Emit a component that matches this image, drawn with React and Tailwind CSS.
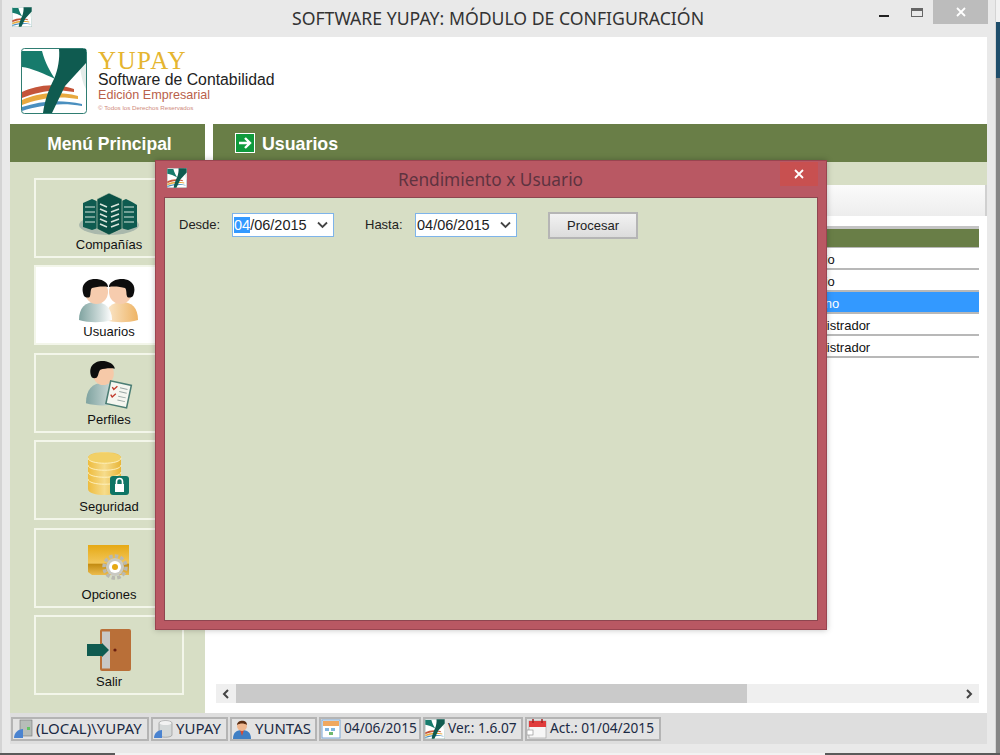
const font = { fontFamily: '"Liberation Sans", Arial, sans-serif' };
const uiFont = { fontFamily: '"Noto Sans", "Open Sans", sans-serif' };

// Yupay logo, used big in the header and small in the title bars
const YupayLogo = ({ size }) => (
  <svg width={size} height={size} viewBox="0 0 66 66" className="shrink-0">
    <rect x="0.5" y="0.5" width="65" height="65" rx="3" fill="#fff" stroke="#2f7d72" />
    <path d="M1 3h20c3 12 8 20 13 28C24 26 10 20 1 19z" fill="#177b6c" />
    <path d="M56 1h9v40c-6-10-6-28-9-40z" fill="#e4ece9" />
    <path d="M1 44c14-6 30-10 52-3v3C34 40 16 44 1 50z" fill="#c4553a" />
    <path d="M1 52c14-6 32-10 56-4v3C36 47 16 51 1 57z" fill="#e8a93e" />
    <path d="M1 59c18-6 38-8 60-3v2C38 54 18 58 1 63z" fill="#4a8fbf" />
    <path d="M38 1h27v14L44 38 31 65H22c2-14 6-24 11-34C37 22 39 10 38 1z" fill="#0f5b50" />
  </svg>
);

const Buildings = () => (
  <svg width="60" height="44" viewBox="0 0 60 44">
    <ellipse cx="30" cy="33" rx="30" ry="10" fill="#a9b8ac" />
    <path d="M4 11l9-4 9 4v24l-9 3-9-3z" fill="#0f5b50" />
    <path d="M38 11l9-4 6 3 5 3v22l-9 3-11-3z" fill="#0f5b50" />
    <path d="M18 7L30 1l13 6v30l-13 6-12-6z" fill="#0b5146" stroke="#d7dec5" strokeWidth="0.6" />
    <g stroke="#d8e5dc" strokeWidth="1.6">
      <path d="M21 12l7 3M21 17l7 3M21 22l7 3M21 27l7 3M21 32l7 3" />
      <path d="M32 15l8-3M32 20l8-3M32 25l8-3M32 30l8-3M32 35l8-3" />
      <path d="M6 15h10M6 20h10M6 25h10M6 30h10" strokeWidth="1.2" />
      <path d="M45 15h10M45 20h10M45 25h10M45 30h10" strokeWidth="1.2" />
    </g>
  </svg>
);

const Person = ({ body, flip }) => (
  <g transform={flip ? 'translate(59,0) scale(-1,1)' : undefined}>
    <path d="M0 41c0-12 6-18 16-18s17 6 17 18c-10 3-23 3-33 0z" fill={body} />
    <ellipse cx="17.5" cy="13" rx="11.5" ry="12" fill="#f6ccae" />
    <path d="M5 17C0 5 9-1 18 0c7 1 11 4 11 8-5-1-12 0-16 1-2 2-1 6-2 8 0 2-4 2-6 0z" fill="#0d0d0d" />
  </g>
);

const Users2 = () => (
  <svg width="60" height="44" viewBox="0 0 60 44">
    <defs>
      <linearGradient id="ub1" x1="0" x2="1">
        <stop offset="0" stopColor="#7fa3a0" />
        <stop offset="0.65" stopColor="#cfdcdb" />
        <stop offset="1" stopColor="#ffffff" />
      </linearGradient>
      <linearGradient id="ub2" x1="0" x2="1">
        <stop offset="0" stopColor="#eeb465" />
        <stop offset="1" stopColor="#fbe9d0" />
      </linearGradient>
    </defs>
    <Person body="url(#ub2)" flip />
    <Person body="url(#ub1)" />
  </svg>
);

const Perfil = () => (
  <svg width="48" height="52" viewBox="0 0 50 52">
    <defs>
      <linearGradient id="pb" x1="0" x2="1">
        <stop offset="0" stopColor="#7fa3a0" />
        <stop offset="1" stopColor="#dfe8e6" />
      </linearGradient>
    </defs>
    <path d="M1 45c0-14 7-21 17-21s17 7 17 21c-10 3-24 3-34 0z" fill="url(#pb)" />
    <ellipse cx="19" cy="14" rx="11" ry="12" fill="#f6c9a8" />
    <path d="M7 18C2 6 11 0 20 1c7 1 11 5 11 8-5-1-11 0-15 1-2 2-2 6-3 7 0 2-4 3-6 1z" fill="#0d0d0d" />
    <g transform="rotate(12 36 36)">
      <rect x="24" y="24" width="22" height="24" fill="#f5f6f0" stroke="#4b7d74" strokeWidth="1.6" />
      <path d="M35 29h8M35 33h8M35 38h8M35 42h8" stroke="#9aa7a5" strokeWidth="1" />
      <path d="M27 30l2 2 3-4M27 38l2 2 3-4" stroke="#c0392b" strokeWidth="1.4" fill="none" />
    </g>
  </svg>
);

const Coins = () => (
  <svg width="42" height="44" viewBox="0 0 42 44" className="mb-[2px]">
    <defs>
      <linearGradient id="cg" x1="0" x2="1">
        <stop offset="0" stopColor="#eebc3e" />
        <stop offset="0.5" stopColor="#f6dc8c" />
        <stop offset="1" stopColor="#e8b537" />
      </linearGradient>
    </defs>
    <path d="M0 6c0-8 33-8 33 0v31c0 8-33 8-33 0z" fill="url(#cg)" />
    <ellipse cx="16.5" cy="6" rx="16.5" ry="5.5" fill="#f2d066" />
    <g fill="none" stroke="#fff3c4" strokeWidth="0.9">
      <path d="M0 6c0 7 33 7 33 0M0 13c0 7 33 7 33 0M0 20c0 7 33 7 33 0M0 27c0 7 33 7 33 0" />
    </g>
    <rect x="22" y="24" width="19" height="19" rx="3" fill="#0f7565" />
    <rect x="27" y="32" width="9" height="8" fill="#fff" />
    <path d="M28.5 32v-2.5a3 3 0 016 0V32" stroke="#fff" strokeWidth="1.6" fill="none" />
  </svg>
);

const OptionsIcon = () => (
  <svg width="44" height="38" viewBox="0 0 44 38" className="mb-[4px]">
    <defs>
      <linearGradient id="og" x1="0" y1="0" x2="0" y2="1">
        <stop offset="0" stopColor="#e6a914" />
        <stop offset="0.6" stopColor="#f2c659" />
        <stop offset="0.65" stopColor="#c48d14" />
        <stop offset="1" stopColor="#ecbc4d" />
      </linearGradient>
    </defs>
    <path d="M1 1h41v30H5l-4-3z" fill="url(#og)" />
    <circle cx="28" cy="23" r="11" fill="none" stroke="#b9b9b1" strokeWidth="3.5" strokeDasharray="3.5 2.2" />
    <circle cx="28" cy="23" r="9" fill="#c9c9c2" />
    <circle cx="28" cy="23" r="6" fill="#fff" />
    <circle cx="28" cy="23" r="3" fill="#e6a914" />
  </svg>
);

const DoorIcon = () => (
  <svg width="46" height="44" viewBox="0 0 46 44" className="mb-[1px]">
    <rect x="14" y="1" width="31" height="42" rx="2" fill="#b96f38" />
    <rect x="16" y="3.5" width="8" height="37" fill="#c8c8c6" />
    <circle cx="29" cy="22" r="1.6" fill="#6a1f10" />
    <path d="M1 16h15v-1l7 7-7 7v-1H1z" fill="#0f5b50" />
  </svg>
);

const MenuItem = ({ label, icon, active }) => (
  <div
    className={`w-[150px] h-[80px] shrink-0 border-2 border-[#f3f6ea] flex flex-col items-center justify-end pb-[4px] text-[13px] leading-[15px] text-[#111] ${active ? 'bg-white' : ''}`}
  >
    <div className="h-[52px] flex items-end justify-center">{icon}</div>
    <span className="mt-[1px]">{label}</span>
  </div>
);

// names are set a little bigger than the dates, Noto's digits run wide
const StatusCell = ({ w, icon, small, children }) => (
  <div
    className={`h-[24px] border-2 border-[#b4b4b4] bg-[#e3e3e3] flex items-center gap-[3px] text-[#1b2a44] whitespace-nowrap ${small ? 'text-[13.7px]' : 'text-[15px]'}`}
    style={{ ...uiFont, width: w }}
  >
    {icon}
    <span>{children}</span>
  </div>
);

const ServerIco = () => (
  <svg width="20" height="20" viewBox="0 0 20 20" className="shrink-0">
    <rect x="7" y="1" width="12" height="16" fill="#b7bdb9" stroke="#777" strokeWidth="0.6" />
    <path d="M1 19c0-5 4-9 9-9v9z" fill="#4a83d0" />
    <rect x="14" y="8" width="3" height="3" fill="#62c462" />
  </svg>
);

const DbIco = () => (
  <svg width="20" height="20" viewBox="0 0 20 20" className="shrink-0">
    <path d="M6 4c0-3 13-3 13 0v12c0 3-13 3-13 0z" fill="#d4d8d8" stroke="#8a8a8a" strokeWidth="0.6" />
    <ellipse cx="12.5" cy="4" rx="6" ry="2" fill="#f2f2f2" />
    <path d="M1 19c0-5 4-8 8-8v8z" fill="#4a83d0" />
  </svg>
);

const UserIco = () => (
  <svg width="20" height="20" viewBox="0 0 20 20" className="shrink-0">
    <path d="M1 20c0-7 4-9 9-9s9 2 9 9z" fill="#3f7fc4" />
    <path d="M8 11h4l-2 6z" fill="#d84c33" />
    <circle cx="10" cy="7" r="5" fill="#efb78f" />
    <path d="M5 6c0-5 10-6 10 0-3-2-7-2-10 0z" fill="#5a2e14" />
  </svg>
);

const CalIco = () => (
  <svg width="20" height="20" viewBox="0 0 20 20" className="shrink-0">
    <rect x="1" y="1" width="18" height="18" fill="#fff" stroke="#7aa7d8" />
    <rect x="2" y="2" width="16" height="5" fill="#f0a860" />
    <path d="M4 9h4v3H4zM10 9h4v3h-4z" fill="#7fb5e0" />
    <path d="M8 13h4v3H8z" fill="#6fb86f" />
  </svg>
);

const ActIco = () => (
  <svg width="20" height="20" viewBox="0 0 20 20" className="shrink-0">
    <rect x="2" y="2" width="17" height="17" fill="#f6f6f6" stroke="#999" strokeWidth="0.6" />
    <rect x="2" y="2" width="17" height="6" fill="#e03c3c" />
    <path d="M6 0v4M15 0v4" stroke="#a02222" strokeWidth="1.5" />
    <rect x="0" y="11" width="6" height="5" fill="#fff" stroke="#888" strokeWidth="0.6" />
  </svg>
);

const Chevron = ({ dir }) => (
  <svg width="10" height="10" viewBox="0 0 10 10">
    <path d={dir === 'left' ? 'M7 1L3 5l4 4' : 'M3 1l4 4-4 4'} fill="none" stroke="#444" strokeWidth="2" />
  </svg>
);

const CloseX = () => (
  <svg width="10" height="10" viewBox="0 0 10 10">
    <path d="M1 1l8 8M9 1l-8 8" stroke="#fff" strokeWidth="1.8" />
  </svg>
);

const DateField = ({ selected }) => (
  <div className="w-[102px] h-[24px] bg-white border border-[#7eb4ea] flex items-center justify-between pl-[1px] pr-[5px] text-[14.5px] text-[#222]">
    <span className="pt-[1px]">
      {selected ? <span className="bg-[#3399ff] text-white">04</span> : '04'}/06/2015
    </span>
    <svg width="11" height="8" viewBox="0 0 11 8">
      <path d="M1 1.5l4.5 4.5L10 1.5" fill="none" stroke="#444" strokeWidth="1.8" />
    </svg>
  </div>
);

const Row = ({ text, selected }) => (
  <div className={`h-[22px] border-b-2 border-[#b8b8b8] pl-[574px] pt-[1px] text-[13px] leading-[22px] overflow-hidden whitespace-nowrap ${selected ? 'bg-[#3399ff] text-white' : 'text-[#111]'}`}>
    {text}
  </div>
);

export default function App() {
  return (
    <div className="relative w-[1000px] h-[755px] overflow-hidden bg-white" style={font}>
      <div className="flex h-[753px]">
        <div className="w-[996px] h-full bg-[#e9e9e9] border-l-[2px] border-r border-[#d4d4d4] flex flex-col">
          {/* title bar */}
          <div className="h-[37px] shrink-0 flex items-start">
            <div className="ml-[10px] mt-[7px]"><YupayLogo size={20} /></div>
            <div className="flex-1 text-center text-[17.65px] leading-[36px] text-[#333] pl-[115px] pr-[30px] whitespace-nowrap" style={uiFont}>
              SOFTWARE YUPAY: MÓDULO DE CONFIGURACIÓN
            </div>
            <div className="w-[10px] h-[2px] bg-[#222] mt-[15px] mr-[22px]" />
            <div className="w-[12px] h-[9px] border border-[#666] border-t-[3px] mt-[8px] mr-[10px]" />
            <div className="w-[55px] h-[24px] bg-[#bcbcbc] flex items-center justify-center mr-[7px]">
              <CloseX />
            </div>
          </div>

          {/* client area */}
          <div className="ml-[8px] mb-[9px] w-[977px] flex-1 flex flex-col min-h-0">
            {/* logo strip */}
            <div className="h-[87px] shrink-0 bg-white flex items-center pl-[11px]">
              <YupayLogo size={66} />
              <div className="ml-[11px] flex flex-col">
                <span className="text-[25px] leading-[22px] tracking-[1.5px] text-[#e5b530]" style={{ fontFamily: '"Liberation Serif", serif' }}>YUPAY</span>
                <span className="text-[15.8px] leading-[16px] text-[#222]">Software de Contabilidad</span>
                <span className="text-[12.6px] leading-[15px] text-[#b9604a]">Edición Empresarial</span>
                <span className="text-[6.2px] leading-[8px] mt-[1px] text-[#cf8a7c]">© Todos los Derechos Reservados</span>
              </div>
            </div>

            {/* section heads */}
            <div className="h-[38px] shrink-0 flex bg-white">
              <div className="w-[195px] bg-[#697e47] text-white font-bold text-[17.5px] flex items-center justify-center pl-[4px] pt-[2px]">
                Menú Principal
              </div>
              <div className="ml-[8px] flex-1 bg-[#697e47] flex items-center pl-[22px] gap-[7px] text-white font-bold text-[17.8px]">
                <span className="w-[20px] h-[20px] bg-[#0f9a3c] border border-white flex items-center justify-center">
                  <svg width="14" height="14" viewBox="0 0 14 14">
                    <path d="M1 7h10M7 2l5 5-5 5" fill="none" stroke="#fff" strokeWidth="2.4" />
                  </svg>
                </span>
                <span className="pt-[3px]">Usuarios</span>
              </div>
            </div>

            <div className="flex-1 flex min-h-0">
              {/* left menu */}
              <div className="w-[195px] shrink-0 bg-[#d7dec5] pl-[24px] pt-[16px] flex flex-col gap-[7.4px]">
                <MenuItem label="Compañías" icon={<Buildings />} />
                <MenuItem label="Usuarios" icon={<Users2 />} active />
                <MenuItem label="Perfiles" icon={<Perfil />} />
                <MenuItem label="Seguridad" icon={<Coins />} />
                <MenuItem label="Opciones" icon={<OptionsIcon />} />
                <MenuItem label="Salir" icon={<DoorIcon />} />
              </div>

              {/* right panel */}
              <div className="flex-1 bg-white flex flex-col min-w-0">
                <div className="h-[23px] shrink-0 bg-[#d7dec5]" />
                <div className="h-[31px] shrink-0 bg-gradient-to-b from-[#fbfbfb] to-[#ededed] border-r-2 border-[#d0d0d0]" />
                <div className="ml-[11px] mr-[8px] mt-[10px] mb-[10px] flex-1 flex flex-col min-h-0">
                  <div className="h-[22px] shrink-0 border-t-[3px] border-b border-t-[#c4c4c4] border-b-[#b8b8b8] bg-[#697e47]" />
                  <div className="flex-1">
                    <Row text="Usuario" />
                    <Row text="Usuario" />
                    <Row text="Humano" selected />
                    <Row text="Administrador" />
                    <Row text="Administrador" />
                  </div>
                  {/* horizontal scrollbar */}
                  <div className="h-[19px] shrink-0 bg-[#efefef] flex items-center">
                    <div className="w-[20px] flex justify-center"><Chevron dir="left" /></div>
                    <div className="w-[511px] h-full bg-[#cacaca]" />
                    <div className="flex-1" />
                    <div className="w-[21px] flex justify-center"><Chevron dir="right" /></div>
                  </div>
                </div>
              </div>
            </div>

            {/* status bar */}
            <div className="h-[31px] shrink-0 bg-[#dedede] flex items-center gap-[2px] pl-[1px]">
              <StatusCell w={138} icon={<ServerIco />}>(LOCAL)\YUPAY</StatusCell>
              <StatusCell w={77} icon={<DbIco />}>YUPAY</StatusCell>
              <StatusCell w={87} icon={<UserIco />}>YUNTAS</StatusCell>
              <StatusCell w={102} icon={<CalIco />} small>04/06/2015</StatusCell>
              <StatusCell w={100} icon={<YupayLogo size={20} />} small>Ver.: 1.6.07</StatusCell>
              <StatusCell w={136} icon={<ActIco />} small>Act.: 01/04/2015</StatusCell>
            </div>
          </div>
        </div>
        {/* desktop seen behind the window */}
        <div className="flex-1 flex flex-col">
          <div className="h-[22px] bg-[#f2f2f2]" />
          <div className="h-[56px] bg-[#1f4e6b]" />
          <div className="flex-1 bg-[#858585]" />
        </div>
      </div>
      <div className="h-[2px] flex">
        <div className="w-[115px] bg-[#5a5a5a]" />
        <div className="w-[710px] bg-[#f2f2f2]" />
        <div className="flex-1 bg-[#5a5a5a]" />
      </div>

      {/* dialog over the window */}
      <div className="absolute left-[155px] top-[160px] w-[672px] h-[470px] bg-[#b95863] border border-[#9a4450] flex flex-col shadow-[0_0_6px_rgba(0,0,0,0.25)]">
        <div className="h-[36px] shrink-0 flex items-start">
          <div className="ml-[11px] mt-[7px]"><YupayLogo size={20} /></div>
          <div className="flex-1 text-center text-[17.25px] leading-[36px] pt-[1px] text-[#5e3340] pl-[14px]" style={uiFont}>Rendimiento x Usuario</div>
          <div className="w-[38px] h-[24px] bg-[#c85050] flex items-center justify-center mr-[8px] mt-[1px]">
            <CloseX />
          </div>
        </div>
        <div className="mx-[8px] mb-[8px] flex-1 bg-[#d7dec5] border border-[#8e4650] flex items-start pl-[14px] pt-[15px] text-[13px] text-[#222]">
          <span className="leading-[24px] w-[53px]">Desde:</span>
          <DateField selected />
          <span className="leading-[24px] w-[50px] ml-[31px]">Hasta:</span>
          <DateField />
          <button className="ml-[31px] w-[90px] h-[27px] -mt-[1px] border-2 border-[#b5b5b5] bg-gradient-to-b from-[#f2f2f2] to-[#dcdcdc] text-[13px] text-[#222]">Procesar</button>
        </div>
      </div>
    </div>
  );
}
